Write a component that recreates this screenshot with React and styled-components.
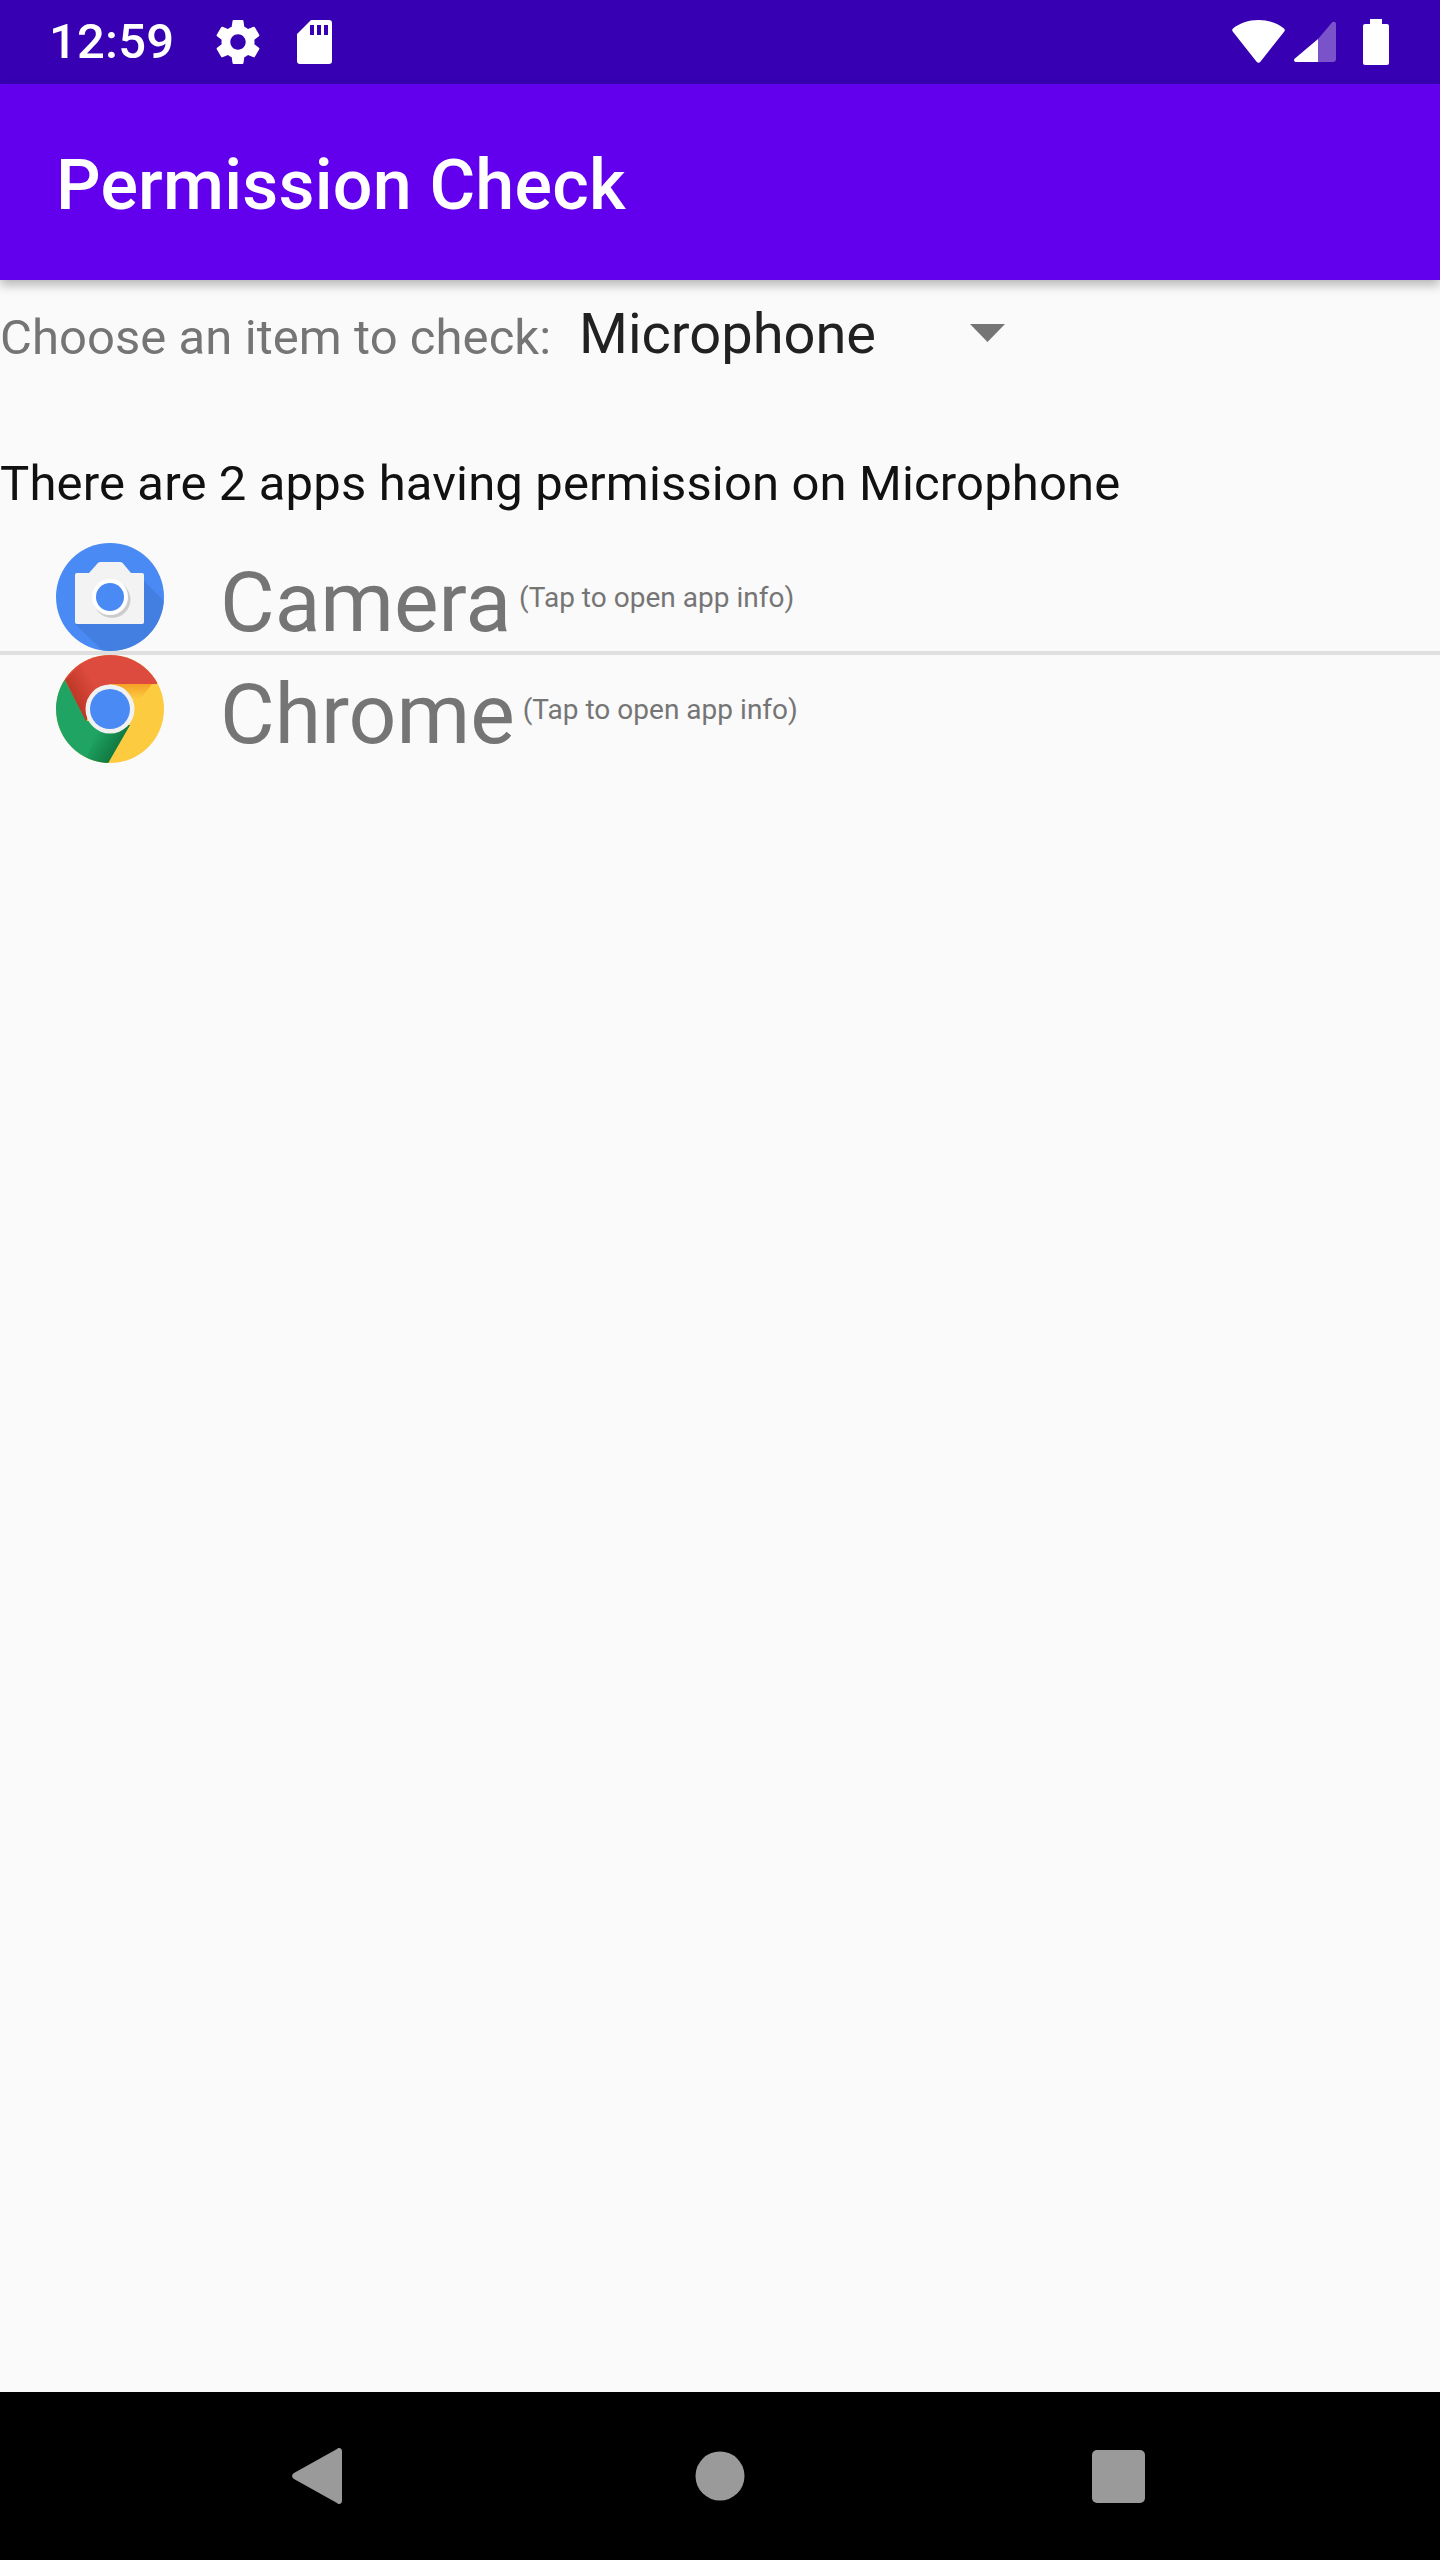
import React from "react";
import styled, { createGlobalStyle } from "styled-components";

const Global = createGlobalStyle`
  html, body { margin: 0; padding: 0; background: #fafafa; }
  body { font-family: Roboto, "Noto Sans", sans-serif; }
`;
const Screen = styled.div`
  width: 1440px; height: 2560px; display: flex; flex-direction: column;
  background: #fafafa; overflow: hidden;
`;
const StatusBar = styled.div`
  height: 84px; flex: none; background: #3700b3; color: #fff; display: flex; align-items: center;
  padding: 0 51px 0 49px; box-sizing: border-box;
`;
const Clock = styled.span`
  font-size: 49px; font-weight: 500; line-height: 84px; width: 167px; margin-top: -1px;
  letter-spacing: .2px;
`;
const StatusIcon = styled.svg`
  display: block; flex: none; margin-right: ${p => p.$mr || 0}px; margin-top: -1px; overflow: visible;
`;
const Spacer = styled.div`flex: 1;`;
const AppBar = styled.header`
  height: 196px; flex: none; background: #6200ee; color: #fff; display: flex; align-items: center;
  padding-left: 57px; box-shadow: 0 5px 10px rgba(0,0,0,.28); position: relative; z-index: 1;
`;
const Title = styled.h1`
  margin: 6px 0 0 -1px; font-size: 70px; font-weight: 500; line-height: 82px; letter-spacing: .2px;
`;
const Content = styled.main`flex: 1; display: flex; flex-direction: column;`;
const PickerRow = styled.div`
  height: 112px; display: flex; align-items: center; flex: none;
`;
const PickerLabel = styled.span`
  font-size: 49px; color: #757575; width: 579px; flex: none; line-height: 66px; margin-top: 3px;
  letter-spacing: .06px;
`;
const PickerValue = styled.span`
  font-size: 56px; color: #212121; width: 391px; flex: none; line-height: 66px; margin-top: -4px;
`;
const Arrow = styled.svg`display: block; flex: none; margin-top: -6px;`;
const Summary = styled.p`
  margin: 59px 0 0; height: 51px; font-size: 49px; line-height: 66px; color: #111; flex: none;
  letter-spacing: .14px;
`;
const List = styled.div`display: flex; flex-direction: column; margin-top: 41px;`;
const Row = styled.div`
  height: 108px; display: flex; align-items: center; padding-left: 56px;
  ${p => p.$divider ? "border-bottom: 4px solid #dfdfdf;" : ""}
`;
const AppIcon = styled.svg`display: block; flex: none; margin-right: 56px;`;
const AppName = styled.span`
  font-size: 84px; color: #757575; line-height: 108px; margin-top: 11px;
`;
const Hint = styled.span`
  font-size: 28px; color: #757575; line-height: 34px; margin-left: 8px; margin-top: 2px;
  letter-spacing: .02px;
`;
const NavBar = styled.nav`
  height: 168px; flex: none; background: #000; display: flex; align-items: center;
  padding-left: 292px; box-sizing: border-box;
`;
const NavIcon = styled.svg`display: block; flex: none; margin-left: ${p => p.$ml || 0}px;`;

const Gear = () => (
  <StatusIcon $mr={37} width="44" height="44" viewBox="0 0 24 24" fill="#fff">
    <path d="M19.43 12.98c.04-.32.07-.64.07-.98s-.03-.66-.07-.98l2.11-1.65c.19-.15.24-.42.12-.64l-2-3.46c-.12-.22-.39-.3-.61-.22l-2.49 1c-.52-.4-1.08-.73-1.69-.98l-.38-2.65C14.46 2.18 14.25 2 14 2h-4c-.25 0-.46.18-.49.42l-.38 2.65c-.61.25-1.17.59-1.69.98l-2.49-1c-.23-.09-.49 0-.61.22l-2 3.46c-.13.22-.07.49.12.64l2.11 1.65c-.04.32-.07.65-.07.98s.03.66.07.98l-2.11 1.65c-.19.15-.24.42-.12.64l2 3.46c.12.22.39.3.61.22l2.49-1c.52.4 1.08.73 1.69.98l.38 2.65c.03.24.24.42.49.42h4c.25 0 .46-.18.49-.42l.38-2.65c.61-.25 1.17-.59 1.69-.98l2.49 1c.23.09.49 0 .61-.22l2-3.46c.12-.22.07-.49-.12-.64l-2.11-1.65zM12 15.5c-1.93 0-3.5-1.57-3.5-3.5s1.57-3.5 3.5-3.5 3.5 1.57 3.5 3.5-1.57 3.5-3.5 3.5z" transform="translate(12 12) scale(1.2) translate(-12 -12)" />
  </StatusIcon>
);
const SdCard = () => (
  <StatusIcon width="35" height="44" viewBox="0 0 35 44" fill="#fff">
    <path fillRule="evenodd" d="M14 0H32a3 3 0 0 1 3 3V41a3 3 0 0 1-3 3H3a3 3 0 0 1-3-3V14ZM13 5v10h4V5ZM20 5v10h4V5ZM27 5v10h4V5Z" />
  </StatusIcon>
);
const Wifi = () => (
  <StatusIcon $mr={9} width="53" height="43" viewBox="0 0 53 43">
    <path fill="#fff" d="M26.5 0C16.5 0 7.5 3.2 1 8.5c-1 .8-1 2-.3 2.9L24.6 41.8c1 1.3 2.8 1.3 3.8 0L52.3 11.4c.7-.9.7-2.1-.3-2.9C45.5 3.2 36.5 0 26.5 0Z" />
  </StatusIcon>
);
const Signal = () => (
  <StatusIcon $mr={27} width="42" height="41" viewBox="0 0 42 41">
    <path fill="#7a52c9" d="M24 18 38 1.5c1.3-1.4 4-.7 4 1.5V38c0 1.7-1.3 3-3 3H24Z" />
    <path fill="#fff" d="M24 18V41H2c-1.8 0-2.6-2-1.4-3.3Z" />
  </StatusIcon>
);
const Battery = () => (
  <StatusIcon width="26" height="46" viewBox="0 0 26 46" fill="#fff">
    <path d="M7 0h12v5h5a2 2 0 0 1 2 2V44a2 2 0 0 1-2 2H2a2 2 0 0 1-2-2V7a2 2 0 0 1 2-2H7Z" />
  </StatusIcon>
);

const CameraIcon = () => (
  <AppIcon width="108" height="108" viewBox="0 0 108 108">
    <defs>
      <clipPath id="camClip"><circle cx="54" cy="54" r="54" /></clipPath>
    </defs>
    <circle cx="54" cy="54" r="54" fill="#4a8af4" />
    <path clipPath="url(#camClip)" fill="#4079d9" opacity=".7" d="M88 38 130 80V130H70L19 81H88Z" />
    <path fill="#f3f3f3" d="M21 30H33L41 21c.8-1.2 1.8-2 3.5-2H64c1.7 0 2.7.8 3.5 2L75 30H86a2 2 0 0 1 2 2V79a2 2 0 0 1-2 2H21a2 2 0 0 1-2-2V32a2 2 0 0 1 2-2Z" />
    <circle cx="56" cy="56.500" r="18.500" fill="#000" opacity=".16" />
    <circle cx="54" cy="54" r="18" fill="#fff" />
    <circle cx="54" cy="54" r="14" fill="#4a8af4" />
  </AppIcon>
);
const ChromeIcon = () => (
  <AppIcon width="108" height="108" viewBox="0 0 108 108">
    <defs>
      <clipPath id="chrClip"><circle cx="54" cy="54" r="54" /></clipPath>
      <linearGradient id="chrRedShade" gradientUnits="userSpaceOnUse" x1="18" y1="48" x2="42" y2="34">
        <stop offset="0" stopColor="#a52714" stopOpacity=".6" />
        <stop offset="1" stopColor="#a52714" stopOpacity="0" />
      </linearGradient>
      <linearGradient id="chrGreenShade" gradientUnits="userSpaceOnUse" x1="62" y1="92" x2="40" y2="78">
        <stop offset="0" stopColor="#055524" stopOpacity=".55" />
        <stop offset="1" stopColor="#055524" stopOpacity="0" />
      </linearGradient>
      <linearGradient id="chrYellowShade" gradientUnits="userSpaceOnUse" x1="70" y1="29" x2="70" y2="44">
        <stop offset="0" stopColor="#ea6100" stopOpacity=".4" />
        <stop offset="1" stopColor="#ea6100" stopOpacity="0" />
      </linearGradient>
    </defs>
    <g clipPath="url(#chrClip)">
      <rect width="108" height="108" fill="#fdcb40" />
      <path fill="url(#chrYellowShade)" d="M54 29H96L72 60Z" />
      <path fill="#1fa463" d="M9 25 31 66 74 70 51 110H-10V25Z" />
      <path fill="url(#chrGreenShade)" d="M74 70 51 110 30 104 46 66Z" />
      <path fill="#dd4b3e" d="M9 25 30 66 54 29H101L108 0H0Z" />
      <path fill="url(#chrRedShade)" d="M9 25 30 66 54 29 30 4Z" />
    </g>
    <circle cx="54" cy="54" r="24.500" fill="#f1f1f1" />
    <circle cx="54" cy="54" r="20" fill="#4a8af4" />
  </AppIcon>
);

const apps = [
  { name: "Camera", Icon: CameraIcon },
  { name: "Chrome", Icon: ChromeIcon },
];

export default function App() {
  return (
    <Screen>
      <Global />
      <StatusBar>
        <Clock>12:59</Clock>
        <Gear />
        <SdCard />
        <Spacer />
        <Wifi />
        <Signal />
        <Battery />
      </StatusBar>
      <AppBar><Title>Permission Check</Title></AppBar>
      <Content>
        <PickerRow>
          <PickerLabel>Choose an item to check:</PickerLabel>
          <PickerValue>Microphone</PickerValue>
          <Arrow width="35" height="18" viewBox="0 0 35 18"><path fill="#757575" d="M0 0H35L17.5 18Z" /></Arrow>
        </PickerRow>
        <Summary>There are 2 apps having permission on Microphone</Summary>
        <List>
          {apps.map(({ name, Icon }, i) => (
            <Row key={name} $divider={i === 0}>
              <Icon />
              <AppName>{name}</AppName>
              <Hint>(Tap to open app info)</Hint>
            </Row>
          ))}
        </List>
      </Content>
      <NavBar>
        <NavIcon width="50" height="56" viewBox="0 0 50 56"><path fill="#9a9a9a" d="M47 0c2 0 3 1.500 3 3V53c0 2-1.500 3-3 3-1 0-1.500-.5-2-1L2 31c-2.500-1.500-2.500-4.500 0-6L45 1c.5-.5 1-1 2-1Z" /></NavIcon>
        <NavIcon $ml={353} width="50" height="50" viewBox="0 0 50 50"><circle cx="25" cy="25" r="24.5" fill="#9a9a9a" /></NavIcon>
        <NavIcon $ml={347} width="53" height="53" viewBox="0 0 53 53"><rect width="53" height="53" rx="5" fill="#9a9a9a" /></NavIcon>
      </NavBar>
    </Screen>
  );
}
